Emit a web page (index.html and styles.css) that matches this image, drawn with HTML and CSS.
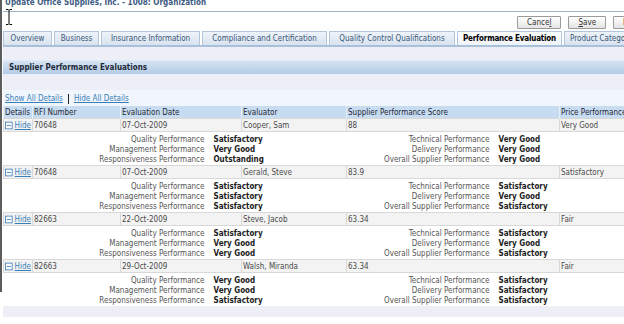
FILE: index.html
```html
<!DOCTYPE html>
<html lang="en-us">
	<head>
		<meta charset="UTF-8">
		<title>Update Office Supplies - Organization</title>
		<link rel="stylesheet" href="styles.css">
	</head>
	<body>
		<div class="frame">
			<h1 class="pageTitle">Update Office Supplies, Inc. - 1008: Organization</h1>

			<!-- mouse text cursor -->
			<svg class="cursor" width="8" height="16" viewBox="0 0 8 16">
				<path d="M1 0.5h2.5M4.5 0.5h2.5M4 1v14M1 15.5h2.5M4.5 15.5h2.5" stroke="#000" stroke-width="1" fill="none"/>
			</svg>

			<div class="buttonBar">
				<button class="btn">Cance<u>l</u></button>
				<button class="btn"><u>S</u>ave</button>
				<button class="btn">Exit</button>
			</div>

			<div class="tabs">
				<div class="tab">Overview</div>
				<div class="tab">Business</div>
				<div class="tab">Insurance Information</div>
				<div class="tab">Compliance and Certification</div>
				<div class="tab">Quality Control Qualifications</div>
				<div class="tab current">Performance Evaluation</div>
				<div class="tab">Product Categories</div>
			</div>

			<div class="panel">
				<div class="panelTop"></div>
				<div class="sectionHeader">Supplier Performance Evaluations</div>
				<div class="panelGap"></div>
				<div class="detailLinks">
					<a href="#">Show All Details</a>
					<span class="sep"></span>
					<a href="#">Hide All Details</a>
				</div>

				<table class="evalTable">
					<colgroup>
						<col class="colDetails">
						<col class="colRfi">
						<col class="colDate">
						<col class="colEvaluator">
						<col class="colScore">
						<col class="colPrice">
					</colgroup>
					<thead>
						<tr>
							<th>Details</th>
							<th>RFI Number</th>
							<th>Evaluation Date</th>
							<th>Evaluator</th>
							<th>Supplier Performance Score</th>
							<th>Price Performance</th>
						</tr>
					</thead>
					<tbody>
						<tr class="summaryRow">
							<td><a class="toggle" href="#"><svg width="9" height="9" viewBox="0 0 9 9"><rect x="0.5" y="0.5" width="8" height="8" fill="#fff" stroke="#3f7fb9"/><path d="M2 4.5h5" stroke="#3f7fb9"/></svg>Hide</a></td>
							<td>70648</td>
							<td>07-Oct-2009</td>
							<td>Cooper, Sam</td>
							<td>88</td>
							<td>Very Good</td>
						</tr>
						<tr class="detailRow">
							<td colspan="6">
								<div class="detailGrid">
									<span class="lbl">Quality Performance</span><span class="val">Satisfactory</span>
									<span class="lbl">Technical Performance</span><span class="val">Very Good</span>
									<span class="lbl">Management Performance</span><span class="val">Very Good</span>
									<span class="lbl">Delivery Performance</span><span class="val">Very Good</span>
									<span class="lbl">Responsiveness Performance</span><span class="val">Outstanding</span>
									<span class="lbl">Overall Supplier Performance</span><span class="val">Very Good</span>
								</div>
							</td>
						</tr>

						<tr class="summaryRow">
							<td><a class="toggle" href="#"><svg width="9" height="9" viewBox="0 0 9 9"><rect x="0.5" y="0.5" width="8" height="8" fill="#fff" stroke="#3f7fb9"/><path d="M2 4.5h5" stroke="#3f7fb9"/></svg>Hide</a></td>
							<td>70648</td>
							<td>07-Oct-2009</td>
							<td>Gerald, Steve</td>
							<td>83.9</td>
							<td>Satisfactory</td>
						</tr>
						<tr class="detailRow">
							<td colspan="6">
								<div class="detailGrid">
									<span class="lbl">Quality Performance</span><span class="val">Satisfactory</span>
									<span class="lbl">Technical Performance</span><span class="val">Satisfactory</span>
									<span class="lbl">Management Performance</span><span class="val">Satisfactory</span>
									<span class="lbl">Delivery Performance</span><span class="val">Very Good</span>
									<span class="lbl">Responsiveness Performance</span><span class="val">Satisfactory</span>
									<span class="lbl">Overall Supplier Performance</span><span class="val">Satisfactory</span>
								</div>
							</td>
						</tr>

						<tr class="summaryRow">
							<td><a class="toggle" href="#"><svg width="9" height="9" viewBox="0 0 9 9"><rect x="0.5" y="0.5" width="8" height="8" fill="#fff" stroke="#3f7fb9"/><path d="M2 4.5h5" stroke="#3f7fb9"/></svg>Hide</a></td>
							<td>82663</td>
							<td>22-Oct-2009</td>
							<td>Steve, Jacob</td>
							<td>63.34</td>
							<td>Fair</td>
						</tr>
						<tr class="detailRow">
							<td colspan="6">
								<div class="detailGrid">
									<span class="lbl">Quality Performance</span><span class="val">Satisfactory</span>
									<span class="lbl">Technical Performance</span><span class="val">Satisfactory</span>
									<span class="lbl">Management Performance</span><span class="val">Very Good</span>
									<span class="lbl">Delivery Performance</span><span class="val">Very Good</span>
									<span class="lbl">Responsiveness Performance</span><span class="val">Very Good</span>
									<span class="lbl">Overall Supplier Performance</span><span class="val">Satisfactory</span>
								</div>
							</td>
						</tr>

						<tr class="summaryRow">
							<td><a class="toggle" href="#"><svg width="9" height="9" viewBox="0 0 9 9"><rect x="0.5" y="0.5" width="8" height="8" fill="#fff" stroke="#3f7fb9"/><path d="M2 4.5h5" stroke="#3f7fb9"/></svg>Hide</a></td>
							<td>82663</td>
							<td>29-Oct-2009</td>
							<td>Walsh, Miranda</td>
							<td>63.34</td>
							<td>Fair</td>
						</tr>
						<tr class="detailRow">
							<td colspan="6">
								<div class="detailGrid">
									<span class="lbl">Quality Performance</span><span class="val">Very Good</span>
									<span class="lbl">Technical Performance</span><span class="val">Satisfactory</span>
									<span class="lbl">Management Performance</span><span class="val">Very Good</span>
									<span class="lbl">Delivery Performance</span><span class="val">Satisfactory</span>
									<span class="lbl">Responsiveness Performance</span><span class="val">Satisfactory</span>
									<span class="lbl">Overall Supplier Performance</span><span class="val">Satisfactory</span>
								</div>
							</td>
						</tr>
					</tbody>
				</table>

				<div class="panelBottom"></div>
			</div>
		</div>
	</body>
</html>
```

FILE: styles.css
```css
html
{
	overflow: hidden;
}

body
{
	margin: 0;
	height: 324px;
	/* dark window edge down the left side */
	background: #FFFFFF linear-gradient(#5c5c5c, #5c5c5c) no-repeat 0 0 / 2px 292px;
	font-family: "DejaVu Sans Condensed", "DejaVu Sans", sans-serif;
	font-stretch: condensed;
	font-size: 8px;
	color: #333333;
}

.frame
{
	position: relative;
	width: 720px;
	padding-left: 2px;
}

.pageTitle
{
	margin: -1px 0 0 1px;
	padding: 0 0 0 2px;
	height: 12px;
	border-bottom: 1px solid #a3b3c8;
	font-size: 8px;
	line-height: 7px;
	font-weight: bold;
	color: #3d5b83;
	letter-spacing: 0.05px;
}

.cursor
{
	position: absolute;
	left: 5px;
	top: 10px;
}

.buttonBar
{
	display: flex;
	gap: 7px;
	padding: 4px 0 0 515px;
	height: 13px;
}

.btn
{
	height: 13px;
	padding: 0 9px;
	border: 1px solid #9a9a9a;
	border-radius: 1px;
	background: linear-gradient(#FFFFFF, #E4E4E4);
	font-family: inherit;
	font-stretch: condensed;
	font-size: 8px;
	color: #333333;
	line-height: 11px;
}

.tabs
{
	display: flex;
	gap: 2px;
	margin: 2px 0 0 1px;
	height: 14px;
}

.tab
{
	flex: none;
	box-sizing: border-box;
	padding: 0 5px;
	border: 1px solid #b3c5da;
	border-bottom: none;
	background: linear-gradient(#EEF3F9, #D8E3EF);
	color: #3b5878;
	line-height: 13px;
	text-align: center;
	white-space: nowrap;
}

/* tab widths as laid out by the original form */
.tab:nth-child(1) { width: 49px; }
.tab:nth-child(2) { width: 45px; }
.tab:nth-child(3) { width: 99px; }
.tab:nth-child(4) { width: 125px; }
.tab:nth-child(5) { width: 126px; }
.tab:nth-child(6) { width: 105px; }

.tab.current
{
	padding: 0;
	background: linear-gradient(#FFFFFF, #EEF3F8);
	color: #000000;
	font-weight: bold;
	letter-spacing: -0.2px;
}

.panel
{
	margin-left: 1px;
	border-top: 2px solid #a9c0db;
	background: #EEEEF6;
}

.panelTop
{
	height: 13px;
}

.sectionHeader
{
	height: 13px;
	padding-left: 6px;
	border-top: 1px solid #e3ecf6;
	background: linear-gradient(#D5E3F2, #B3CBE6);
	font-weight: bold;
	color: #1e2a38;
	line-height: 13px;
}

.panelGap
{
	height: 16px;
}

.detailLinks
{
	display: flex;
	align-items: center;
	height: 15px;
	padding: 1px 0 0 2px;
	background: #F1F6FC;
}

.detailLinks a
{
	color: #3a80b8;
}

.sep
{
	width: 1px;
	height: 10px;
	margin: 0 5px;
	background: #222222;
}

.evalTable
{
	width: 706px;
	table-layout: fixed;
	border-collapse: collapse;
	background: #FFFFFF;
}

.colDetails { width: 29px; }
.colRfi { width: 88px; }
.colDate { width: 121px; }
.colEvaluator { width: 105px; }
.colScore { width: 213px; }
.colPrice { width: 150px; }

.evalTable th
{
	height: 12px;
	padding: 0 1px;
	background: #C8DCF1;
	border-left: 1px solid #E4EEF8;
	text-align: left;
	font-weight: normal;
	color: #1c2836;
	white-space: nowrap;
	overflow: hidden;
}

.summaryRow td
{
	height: 12px;
	padding: 0 1px;
	background: #F3F3F3;
	border: 1px solid #D8D8D8;
	color: #4a4a4a;
	white-space: nowrap;
}

.toggle
{
	display: flex;
	align-items: center;
	gap: 2px;
	color: #3a80b8;
}

.detailRow td
{
	padding: 3px 0 0;
	height: 30px;
	vertical-align: top;
}

.detailGrid
{
	display: grid;
	grid-template-columns: 201px 69px 216px auto;
	line-height: 10px;
}

.lbl
{
	text-align: right;
	color: #555555;
}

.val
{
	padding-left: 9px;
	font-weight: bold;
	color: #222222;
}

.panelBottom
{
	height: 11px;
}
```
